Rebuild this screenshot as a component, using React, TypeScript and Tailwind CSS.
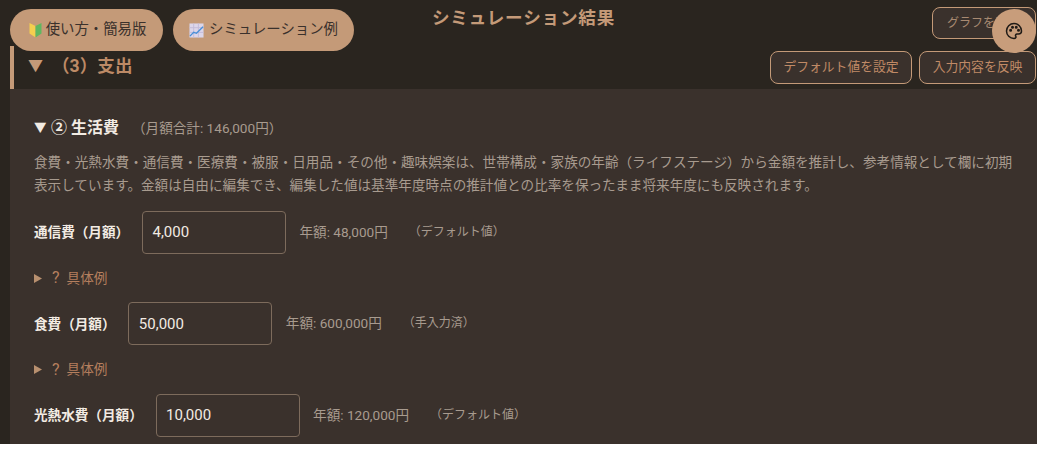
import React from "react";

const font = { fontFamily: 'Roboto, "Noto Sans CJK JP", sans-serif' };

function Beginner() {
  return (
    <svg width="17" height="16" viewBox="-2 0 17 16" className="shrink-0">
      <path d="M0.5 1 L6.5 4 V15.5 L0.5 11.5 Z" fill="#f4cf4f" />
      <path d="M12.5 1 L6.5 4 V15.5 L12.5 11.5 Z" fill="#5fb760" />
    </svg>
  );
}

function Chart() {
  return (
    <svg width="15" height="15" viewBox="0 0 16 16" className="shrink-0">
      <rect x="0.5" y="0.5" width="15" height="15" fill="#dcd6ea" />
      <path d="M0.5 5H15.5M0.5 10H15.5M5 .5V15.5M10 .5V15.5" stroke="#c3bbd9" strokeWidth="1" />
      <path d="M1 14 L5 10 L8 11 L15 4" stroke="#4a90d9" strokeWidth="1.5" fill="none" />
    </svg>
  );
}

function Palette() {
  return (
    <svg width="18" height="18" viewBox="0 0 24 24" fill="none" stroke="#1f1a16" strokeWidth="2" strokeLinecap="round" strokeLinejoin="round">
      <path d="M12 22a10 10 0 1 1 10-10c0 2.8-2.2 4-4 4h-2a2 2 0 0 0-1.6 3.2c.5.7.2 2.8-2.4 2.8z" />
      <circle cx="7.5" cy="11" r="1" fill="#1f1a16" />
      <circle cx="10" cy="7" r="1" fill="#1f1a16" />
      <circle cx="15" cy="7" r="1" fill="#1f1a16" />
      <circle cx="18" cy="11" r="1" fill="#1f1a16" />
    </svg>
  );
}

function Field({ label, value, annual, note, top }: { label: string; value: string; annual: string; note: string; top: string }) {
  return (
    <div className={`flex items-center h-[43px] ${top}`}>
      <span className="text-[13.6px] font-bold text-[#f2ebe3] mr-[12.8px]">{label}</span>
      <div className="w-[144px] h-[43px] shrink-0 rounded-[4px] border border-[#7d6b5c] bg-[#3a312c] flex items-center pl-[9.5px] text-[15px] text-[#f2ebe3]">{value}</div>
      <span className="ml-[13.5px] text-[13.6px] text-[#a89b8f] -mt-[1px]">{annual}</span>
      <span className="ml-[21px] text-[12px] text-[#a89b8f] -mt-[1px]">{note}</span>
    </div>
  );
}

function Example() {
  return (
    <div className="flex items-center h-[20px] mt-[14.4px] mb-[14.1px] text-[13.6px] text-[#b57f5e]">
      <svg width="8" height="9" viewBox="0 0 8 9" className="mr-[10px]"><path d="M0 0 L8 4.5 L0 9 Z" fill="#b8906f" /></svg>
      <span className="text-[16px] leading-none mr-[7px]">?</span>
      <span>具体例</span>
    </div>
  );
}

export default function App() {
  return (
    <div className="w-[1061px] h-[468px] bg-white" style={font}>
      <div className="relative w-[1037px] h-[444px] overflow-hidden bg-[#2a251f]">
        <header className="h-[46px] flex justify-center relative">
          <h1 className="text-[17.6px] font-bold text-[#c49a78] leading-none mt-[10px] ml-[10px] tracking-[0.8px]">シミュレーション結果</h1>
          <button className="absolute left-[932px] top-[7px] w-[104px] h-[32px] rounded-[8px] border border-[#c49a78] bg-[#3a312c] text-[12px] text-[#a88a72] text-left pl-[14px]">グラフを表示</button>
        </header>

        <button className="absolute left-[10px] top-[9px] w-[153px] h-[42px] rounded-full bg-[#c49a78] text-[#3a312c] text-[14.4px] flex items-center justify-center gap-[2px]">
          <Beginner /><span>使い方・簡易版</span>
        </button>
        <button className="absolute left-[173px] top-[9px] w-[181px] h-[42px] rounded-full bg-[#c49a78] text-[#3a312c] text-[14.4px] flex items-center justify-center gap-[5px]">
          <Chart /><span>シミュレーション例</span>
        </button>
        <button className="absolute left-[992px] top-[9px] w-[44px] h-[44px] rounded-full bg-[#c89d7b] flex items-center justify-center">
          <Palette />
        </button>

        <div className="ml-[10px]">
          <div className="h-[43px] border-l-[4px] border-[#c49a78] flex items-center justify-between pl-[14px] pr-[1px]">
            <h2 className="flex items-center text-[17.6px] font-bold text-[#bd8a66] -mt-[2px]">
              <span className="text-[#c49a78] text-[15px] w-[24px]">▼</span>
              <span>（3）支出</span>
            </h2>
            <div className="flex gap-[7px] -mt-[1px]">
              <button className="w-[142px] h-[33px] rounded-[8px] border border-[#c49a78] bg-[#3a312c] text-[12.8px] text-[#c08a66]">デフォルト値を設定</button>
              <button className="w-[117px] h-[33px] rounded-[8px] border border-[#c49a78] bg-[#3a312c] text-[12.8px] text-[#c08a66]">入力内容を反映</button>
            </div>
          </div>

          <section className="h-[355px] bg-[#3a312c] pl-[24px] pr-[20px] pt-[27px]">
            <div className="flex items-center h-[24px] text-[#f2ebe3]">
              <span className="text-[12.5px] w-[17px]">▼</span>
              <span className="text-[16px] font-bold">② 生活費</span>
              <span className="ml-[13px] text-[13.6px] text-[#a89b8f]">（月額合計: 146,000円）</span>
            </div>
            <p className="mt-[11px] text-[13.6px] leading-[23px] text-[#a89b8f]">
              食費・光熱水費・通信費・医療費・被服・日用品・その他・趣味娯楽は、世帯構成・家族の年齢（ライフステージ）から金額を推計し、参考情報として欄に初期表示しています。金額は自由に編集でき、編集した値は基準年度時点の推計値との比率を保ったまま将来年度にも反映されます。
            </p>
            <Field top="mt-[13.8px]" label="通信費（月額）" value="4,000" annual="年額: 48,000円" note="（デフォルト値）" />
            <Example />
            <Field top="" label="食費（月額）" value="50,000" annual="年額: 600,000円" note="（手入力済）" />
            <Example />
            <Field top="" label="光熱水費（月額）" value="10,000" annual="年額: 120,000円" note="（デフォルト値）" />
          </section>
        </div>
      </div>
    </div>
  );
}
